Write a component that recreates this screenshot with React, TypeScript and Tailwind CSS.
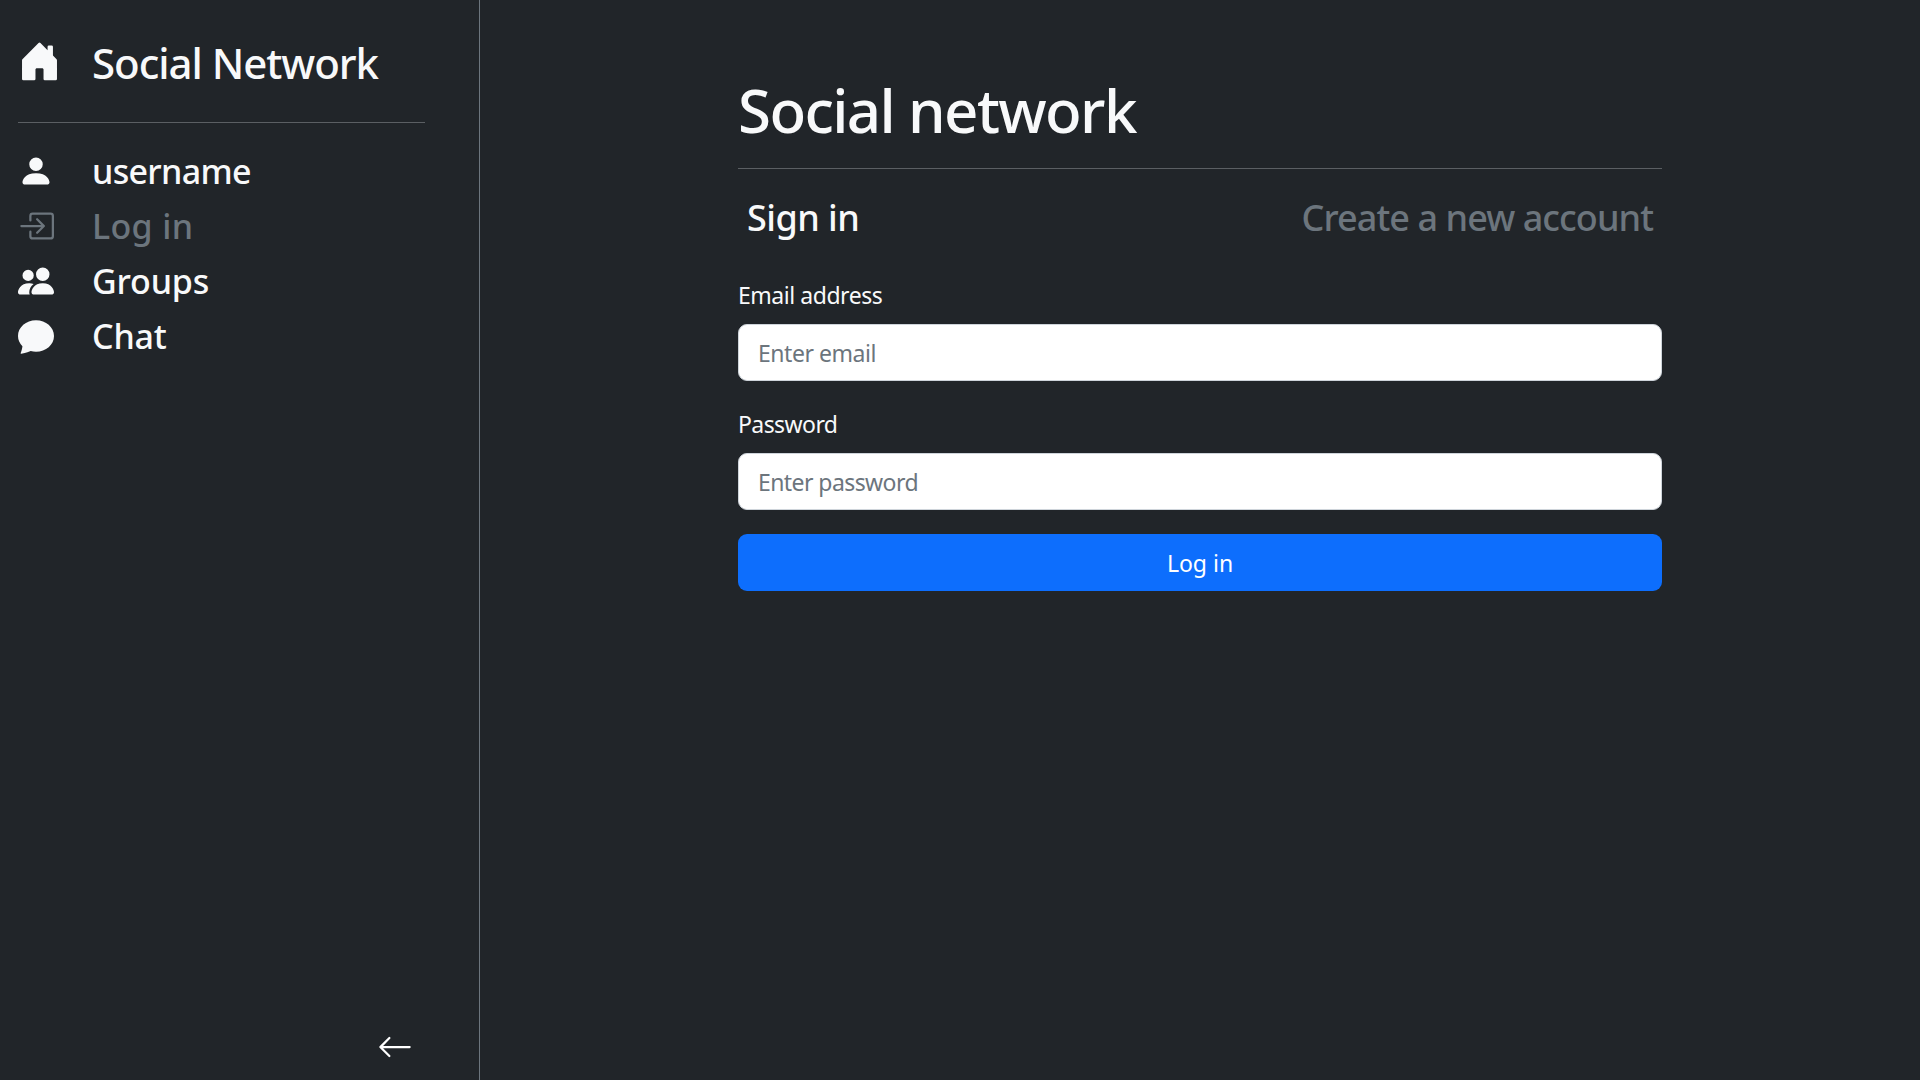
import { BsHouseDoorFill, BsPersonFill, BsBoxArrowInRight, BsPeopleFill, BsChatFill, BsArrowLeft } from "react-icons/bs";

const items = [
  { label: "username", Icon: BsPersonFill, muted: false, track: "tracking-[-0.02em]" },
  { label: "Log in", Icon: BsBoxArrowInRight, muted: true, track: "tracking-[0.01em]" },
  { label: "Groups", Icon: BsPeopleFill, muted: false, track: "tracking-[-0.005em]" },
  { label: "Chat", Icon: BsChatFill, muted: false, track: "tracking-[-0.005em]" },
];

export default function App() {
  return (
    <div className="flex h-screen w-full overflow-hidden bg-[#212529] font-['Noto_Sans',sans-serif] text-[#f8f9fa]">
      <aside className="flex w-[480px] shrink-0 flex-col border-r border-[#6c757d] pl-[18px] pr-[54px]">
        <div className="mt-[36px] flex h-[54px] items-center">
          <BsHouseDoorFill className="-mt-[3px] h-[43px] w-[43px] shrink-0" />
          <span className="-mt-[1px] ml-[31px] text-[42px] font-medium leading-[54px] tracking-[-0.025em]">Social Network</span>
        </div>
        <div className="mt-[32px] h-px w-full bg-[#5b5f63]" />
        <nav className="mt-[21px] flex flex-col">
          {items.map(({ label, Icon, muted, track }) => (
            <div key={label} className={`flex h-[55px] items-center ${muted ? "text-[#6c757d]" : "text-[#f8f9fa]"}`}>
              <Icon className="-mt-[1px] h-[36px] w-[36px] shrink-0" />
              <span className={`ml-[38px] text-[34px] font-medium ${track}`}>{label}</span>
            </div>
          ))}
        </nav>
        <div className="mt-auto mb-[15px] flex justify-end pr-[12px]">
          <BsArrowLeft className="h-[36px] w-[36px] text-white" />
        </div>
      </aside>
      <main className="flex flex-1 justify-center">
        <div className="w-[924px]">
          <h1 className="mt-[74px] text-[60px] font-medium leading-[72px] tracking-[-0.027em]">Social network</h1>
          <div className="mt-[22px] h-px w-full bg-[#5b5f63]" />
          <div className="mt-[22px] flex h-[54px] items-center justify-between px-[9px] text-[36px] font-medium">
            <span className="tracking-[-0.015em]">Sign in</span>
            <span className="tracking-[-0.026em] text-[#6c757d]">Create a new account</span>
          </div>
          <label className="mt-[32px] mb-[11px] block text-[23px] leading-[36px] tracking-[-0.02em]">Email address</label>
          <input placeholder="Enter email" className="block h-[57px] w-full rounded-[9px] border border-[#ced4da] bg-white px-[19px] text-[23px] tracking-[-0.02em] text-[#212529] outline-none placeholder:text-[#6c757d]" />
          <label className="mt-[25px] mb-[11px] block text-[23px] leading-[36px] tracking-[-0.025em]">Password</label>
          <input placeholder="Enter password" className="block h-[57px] w-full rounded-[9px] border border-[#ced4da] bg-white px-[19px] text-[23px] tracking-[-0.025em] text-[#212529] outline-none placeholder:text-[#6c757d]" />
          <button className="mt-[24px] block h-[57px] w-full rounded-[9px] bg-[#0d6efd] pt-[2px] text-[23px] text-white">Log in</button>
        </div>
      </main>
    </div>
  );
}
